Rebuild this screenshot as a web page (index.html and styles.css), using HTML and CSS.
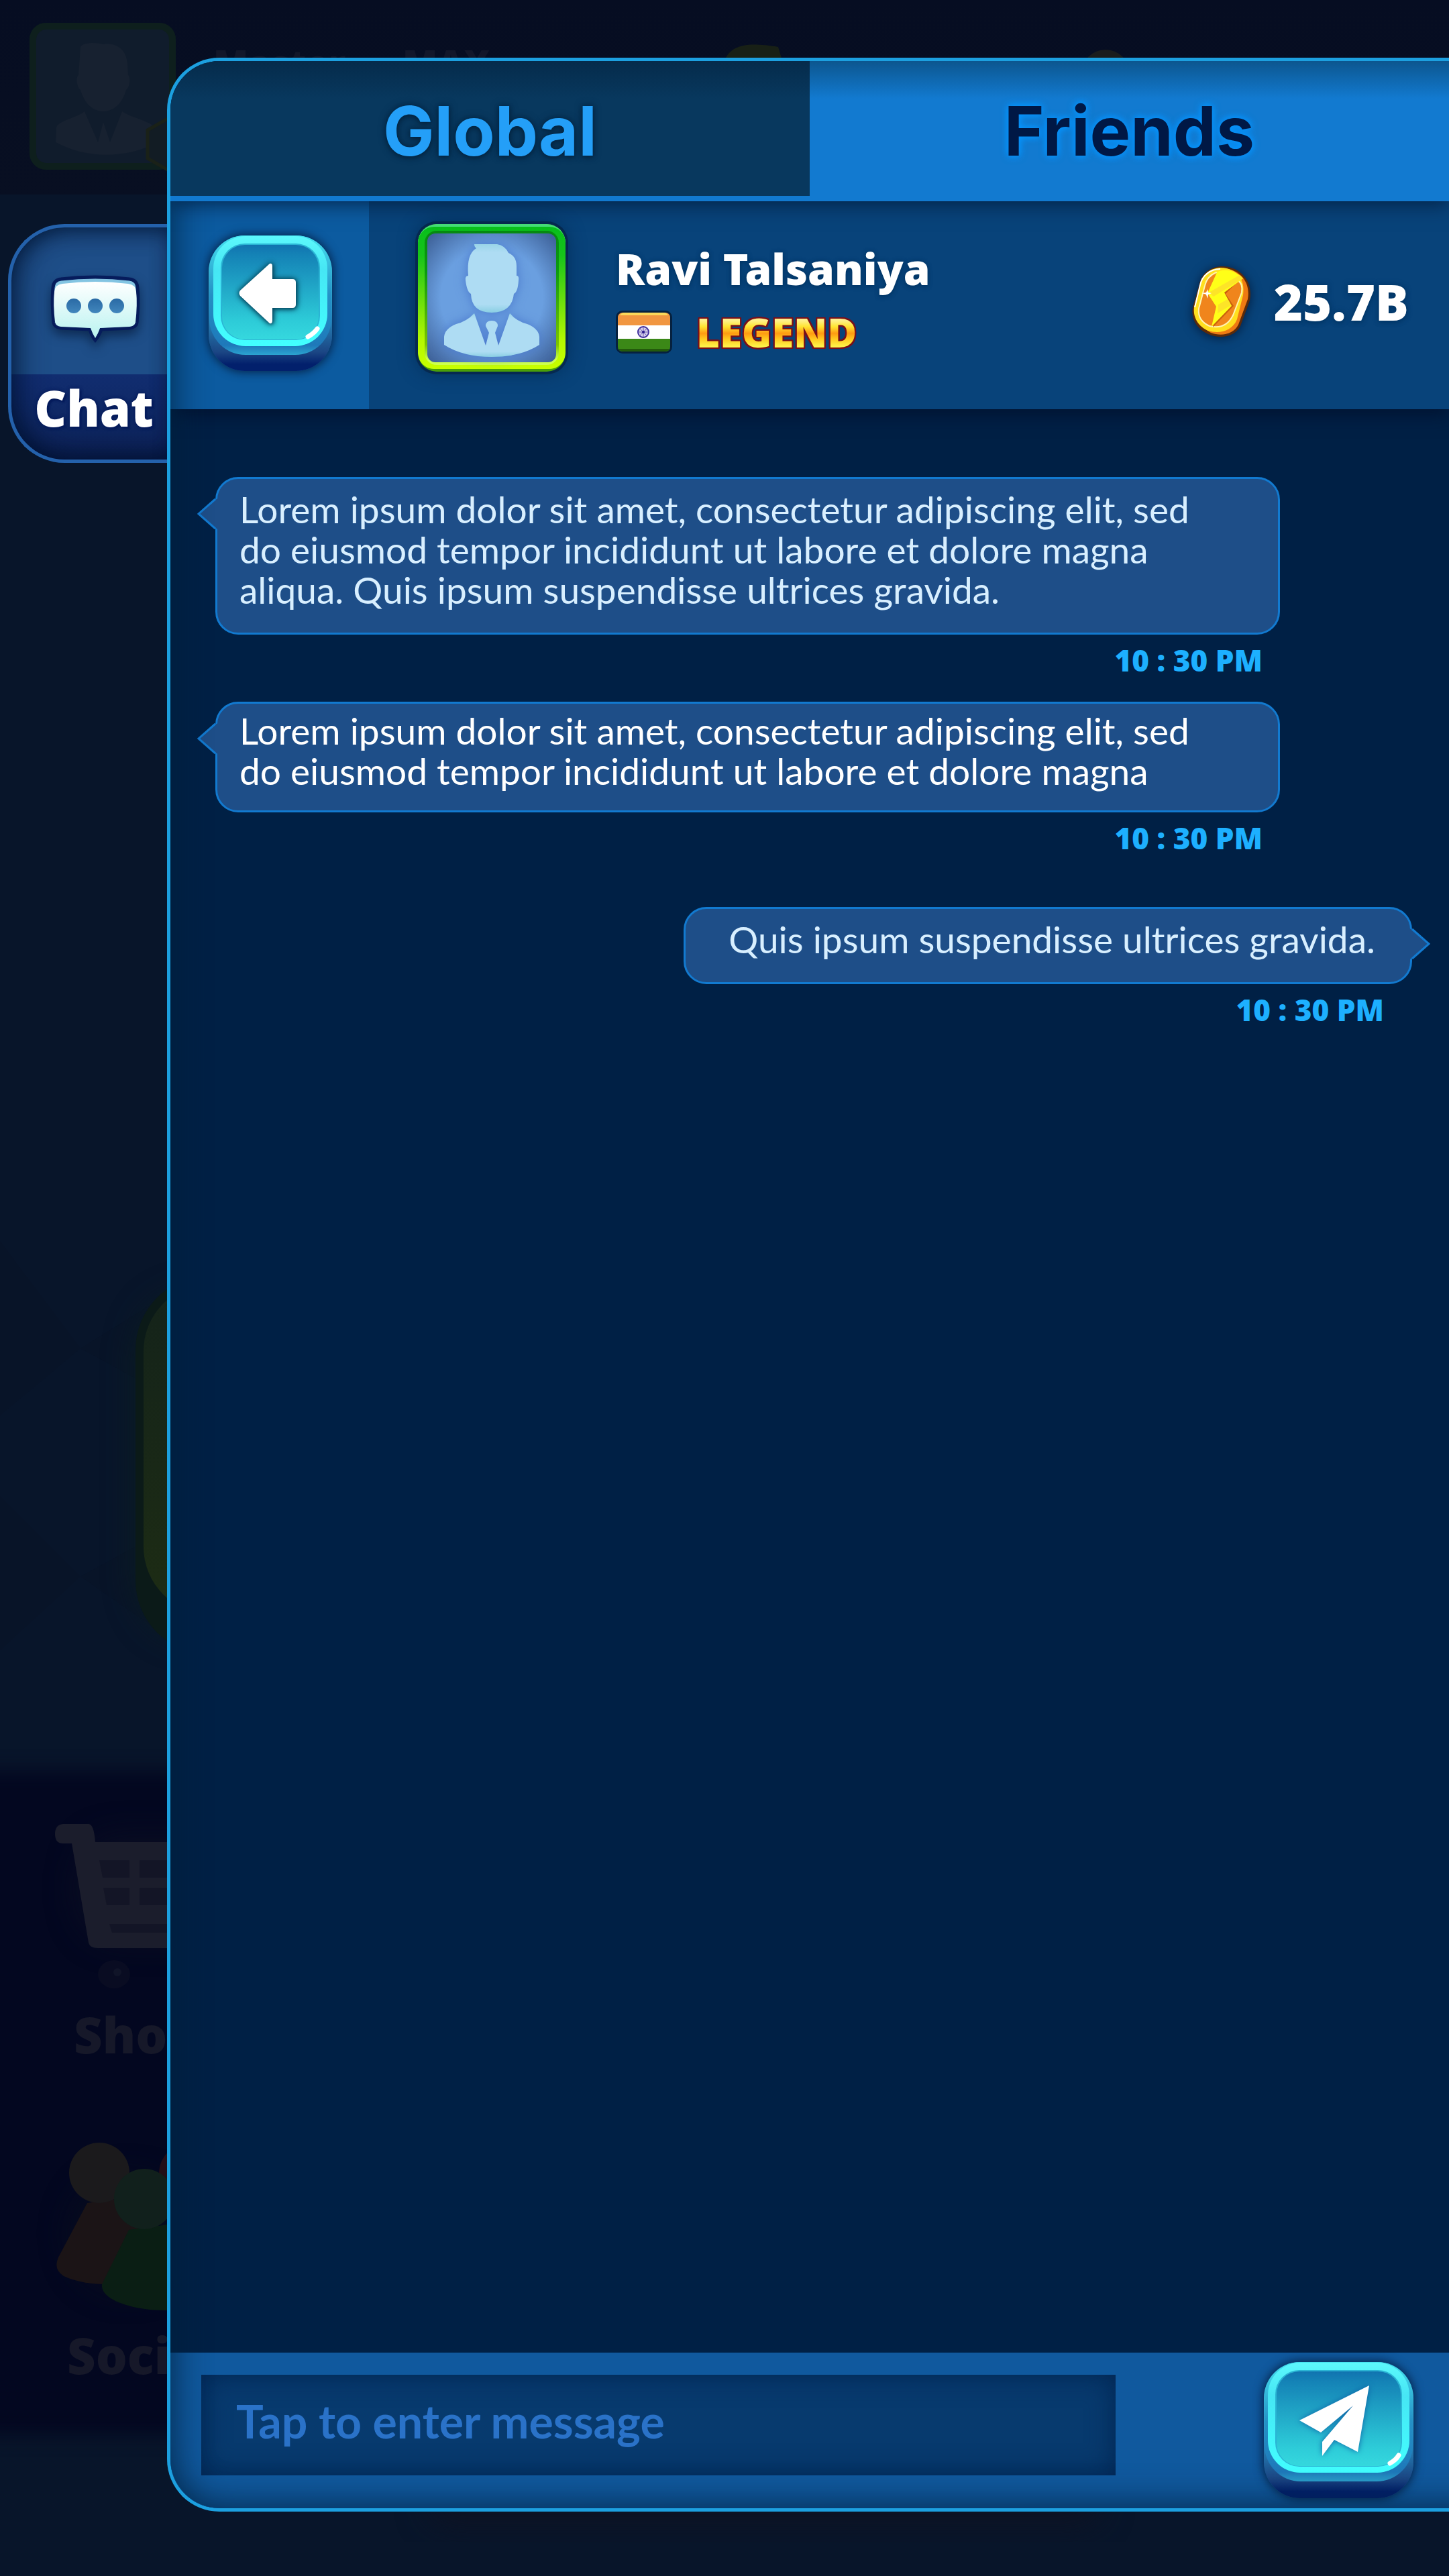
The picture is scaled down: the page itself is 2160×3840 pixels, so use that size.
FILE: index.html
```html
<!DOCTYPE html>
<html lang="en">
<head>
<meta charset="utf-8">
<meta name="viewport" content="width=device-width, initial-scale=1">
<title>Chat</title>
<link rel="stylesheet" href="styles.css">
</head>
<body>
<svg class="scene" viewBox="0 0 2160 3840" preserveAspectRatio="xMinYMin slice" aria-hidden="true">
  <defs>
    <linearGradient id="topBand" x1="0" y1="0" x2="0" y2="1"><stop offset="0" stop-color="#060d22"/><stop offset="1" stop-color="#080f22"/></linearGradient>
    <linearGradient id="play" x1="0" y1="0" x2="0" y2="1"><stop offset="0" stop-color="#14231a"/><stop offset="1" stop-color="#1d2c14"/></linearGradient>
    <filter id="soft" x="-50%" y="-50%" width="200%" height="200%" color-interpolation-filters="sRGB"><feGaussianBlur stdDeviation="24"/></filter>
    <filter id="band" x="-10%" y="-10%" width="120%" height="120%" color-interpolation-filters="sRGB"><feGaussianBlur stdDeviation="14"/></filter>
  </defs>
  <rect width="2160" height="3840" fill="#08152a"/>
  <path d="M0 1850 120 2010 0 2110ZM120 2010 249 1930V2080ZM0 2230 120 2350 0 2460ZM120 2350 249 2280V2440Z" fill="#081428"/>
  <rect width="2160" height="290" fill="url(#topBand)"/>
  <rect x="-40" y="2640" width="700" height="990" fill="#030720" filter="url(#band)"/>
  <rect x="640" y="3700" width="1000" height="60" rx="30" fill="#0e1222" filter="url(#soft)"/>
  <rect x="44" y="34" width="218" height="219" rx="24" fill="#0a1a20"/>
  <rect x="49" y="39" width="208" height="209" rx="20" fill="#101c2c" stroke="#0e1f1d" stroke-width="10"/>
  <path d="M120 70c2-6 20-8 34-4 20-3 34 8 36 28l1 18c4 2 3 18-3 22-6 22-20 32-34 32s-28-10-34-32c-6-4-7-20-3-22ZM84 190c2-10 30-14 42-24l20 46 8-30 10 30 18-46c14 10 44 14 54 28v18c-50 26-110 24-153 0Z" fill="#172130"/>
  <path d="M262 170 220 194v42l42 24" fill="#121c24" stroke="#1a2118" stroke-width="5"/>
  <path d="M1080 90c10-22 30-28 80-20l6 20Z" fill="#182016"/><circle cx="1648" cy="110" r="36" fill="#1a1c1c"/>
  <g class="scene-title" fill="#12172a"><text x="318" y="114">Master</text><text x="600" y="114">MAX</text></g>
  <rect x="205" y="1930" width="500" height="510" rx="90" fill="#0b1e20" filter="url(#soft)"/>
  <rect x="202" y="1902" width="600" height="564" rx="110" fill="#0b1a18"/>
  <rect x="214" y="1914" width="600" height="492" rx="100" fill="url(#play)"/>
  <rect x="120" y="2740" width="400" height="150" rx="60" fill="#0b0e22" filter="url(#soft)"/>
  <path d="M94 2719h38q8 0 10 27h210v158H146q-12 0-14-8L107 2748H94q-12 0-12-14t12-15Z" fill="#1b1d2c"/>
  <path d="m148 2773 5 26h40v-26ZM208 2773h50v26h-50ZM154 2814l5 26h34v-26ZM208 2814h50v26h-50ZM163 2868h100v13h-96Z" fill="#131526"/>
  <ellipse cx="170" cy="2943" rx="24" ry="21" fill="#090c22"/><circle cx="175" cy="2940" r="6" fill="#101428"/>
  <circle cx="190" cy="3330" r="80" fill="#080d1d" filter="url(#soft)"/>
  <path d="M130 3284 87 3365q-8 18 8 28 30 14 80 12l60-80-40-50Z" fill="#1b1416"/><circle cx="148" cy="3239" r="45" fill="#1b1a1c"/>
  <circle cx="282" cy="3240" r="45" fill="#220e18"/>
  <path d="M192 3324 152 3405q-2 14 20 25 40 18 100 13v-130Z" fill="#0a1e14"/><circle cx="215" cy="3278" r="45" fill="#11201c"/>
  <g class="scene-label" fill="#161829"><text x="110" y="3061">Shop</text><text x="100" y="3539">Social</text></g>
</svg>

<main class="app">
  <button class="chat-tab" type="button">
    <span class="chat-tab__icon">
      <svg width="150" height="120" viewBox="0 0 150 120" aria-hidden="true">
        <defs><linearGradient id="bub" x1="0" y1="0" x2="0" y2="1"><stop offset="0" stop-color="#fff"/><stop offset="1" stop-color="#b9f3f0"/></linearGradient><linearGradient id="dot" x1="0" y1="0" x2="0" y2="1"><stop offset="0" stop-color="#2a6aa5"/><stop offset="1" stop-color="#4287bd"/></linearGradient></defs>
        <path d="M24 15Q75 9 126 15 137 16 138 28 140 50 137 80 136 87 126 88L84 90Q80 100 75 106 70 100 67 90L24 88Q14 87 13 80 10 50 12 28 13 16 24 15Z" fill="#83c4e2" stroke="#061c5c" stroke-width="5"/>
        <path d="M26 22Q75 16 124 22 135 23 136 34 138 54 135 79 134 85 126 86L82 88Q79 97 75 103 71 97 68 88L24 86Q16 85 15 79 12 54 14 34 15 23 26 22Z" fill="url(#bub)"/>
        <g fill="url(#dot)"><circle cx="43" cy="55" r="11"/><circle cx="75" cy="55" r="11"/><circle cx="107" cy="55" r="11"/></g>
      </svg>
    </span>
    <span class="chat-tab__label">Chat</span>
  </button>

  <section class="panel">
    <nav class="tabs">
      <button class="tab" type="button">Global</button>
      <button class="tab tab--active" type="button">Friends</button>
    </nav>

    <header class="friend">
      <div class="friend__back">
        <button class="key" type="button" aria-label="Back">
          <svg width="184" height="202" viewBox="0 0 184 202" aria-hidden="true">
            <defs>
              <linearGradient id="side" x1="0" y1="0" x2="0" y2="1"><stop offset="0" stop-color="#43d8e8"/><stop offset=".55" stop-color="#2994c6"/><stop offset=".86" stop-color="#1b4684"/><stop offset=".95" stop-color="#02206c"/></linearGradient>
              <linearGradient id="shelf" x1="0" y1="0" x2="0" y2="1"><stop offset="0" stop-color="#45e2f0"/><stop offset=".5" stop-color="#2591c6"/><stop offset=".92" stop-color="#1e79ba"/><stop offset="1" stop-color="#2ba4d0"/></linearGradient>
              <linearGradient id="ring" x1="0" y1="0" x2="0" y2="1"><stop offset="0" stop-color="#5cf8fc"/><stop offset=".3" stop-color="#46e6f4"/><stop offset="1" stop-color="#42ffff"/></linearGradient>
              <linearGradient id="face" x1="0" y1="0" x2="0" y2="1"><stop offset="0" stop-color="#1173b0"/><stop offset=".1" stop-color="#1482b6"/><stop offset=".8" stop-color="#2dcbd8"/><stop offset="1" stop-color="#35d8de"/></linearGradient>
            </defs>
            <rect width="184" height="202" rx="54" fill="url(#side)"/>
            <rect x="1" width="182" height="178" rx="54" fill="url(#shelf)"/>
            <rect x="7" y="1" width="170" height="164" rx="48" fill="url(#ring)"/>
            <rect x="18" y="12" width="148" height="144" rx="36" fill="#2ab4d4"/>
            <rect x="20" y="14" width="144" height="141" rx="34" fill="url(#face)"/>
            <path class="glyph" d="M91 42q4-1 4 4v19h30q5 0 5 5v33q0 5-5 5H95v19q0 5-4 4L47 90q-3-4 0-8Z" fill="#fff"/>
            <path d="M148 151q9-5 14-12" fill="none" stroke="#fff" stroke-width="7" stroke-linecap="round"/>
          </svg>
        </button>
      </div>
      <div class="friend__body">
        <svg class="avatar" width="220" height="220" viewBox="0 0 220 220" role="img" aria-label="Player avatar">
          <defs>
            <linearGradient id="frame" x1="0" y1="0" x2="0" y2="1"><stop offset="0" stop-color="#08bf1c"/><stop offset=".2" stop-color="#16c31a"/><stop offset=".8" stop-color="#b4f800"/><stop offset="1" stop-color="#c8ff00"/></linearGradient>
            <linearGradient id="bevel" x1="0" y1="0" x2="0" y2="1"><stop offset="0" stop-color="#078a12"/><stop offset=".3" stop-color="#0b9a10"/><stop offset=".85" stop-color="#7cc400"/><stop offset=".96" stop-color="#ccff50"/></linearGradient>
            <radialGradient id="photo" r=".72"><stop offset=".55" stop-color="#6a9fe0"/><stop offset="1" stop-color="#38598f"/></radialGradient>
            <linearGradient id="man" x1="0" y1="0" x2="0" y2="1"><stop offset="0" stop-color="#9ad4e8"/><stop offset=".12" stop-color="#aedcf3"/><stop offset=".88" stop-color="#aedcf3"/><stop offset="1" stop-color="#8acfe3"/></linearGradient>
          </defs>
          <rect width="220" height="220" rx="26" fill="#4a9f08"/>
          <rect width="220" height="216" rx="26" fill="#45dd78"/>
          <rect y="4" width="220" height="212" rx="24" fill="url(#frame)"/>
          <rect x="10" y="10" width="200" height="200" rx="18" fill="url(#bevel)"/>
          <rect x="14" y="14" width="192" height="192" rx="12" fill="url(#photo)"/>
          <g fill="url(#man)" class="man"><path d="M84 30h34q12 2 17 13 12 5 12 20v14q4 0 3 7-1 17-7 20-3 28-33 28t-31-28q-6-3-8-20-1-7 4-7-3-32 12-41-3-2-3-6Z"/><path d="M84 133 101 181l5-19-5-10q0-8 9-8t9 8l-4 10 5 19 17-48q10 12 26 16 17 7 18 19v12q-28 18-71 18t-71-18v-12q1-12 18-19 16-4 27-16Z"/></g>
        </svg>
        <div class="friend__info">
          <h1 class="friend__name">Ravi Talsaniya</h1>
          <div class="friend__rank">
            <svg width="84" height="64" viewBox="0 0 84 64" role="img" aria-label="India">
              <rect width="84" height="64" rx="10" fill="#06213f"/>
              <path d="M3 22V11q0-8 8-8h62q8 0 8 8v11Z" fill="#f19640"/><path d="M6 7q2-4 7-4h58q5 0 7 4Z" fill="#fbd85a"/>
              <path d="M3 22h78v20H3Z" fill="#fff"/>
              <path d="M3 42h78v12q0 7-8 7H11q-8 0-8-7Z" fill="#3b8817"/><path d="M4 57h76q-2 4-7 4H11q-5 0-7-4Z" fill="#245a0c"/>
              <circle cx="41" cy="32" r="8" fill="#d5d0ea" stroke="#3a2a9a" stroke-width="2"/><path d="M41 24v16M33 32h16M35 26l12 12M47 26 35 38" stroke="#6a5bb5" stroke-width="1"/><circle cx="41" cy="32" r="2" fill="#2a1a8a"/>
            </svg>
            <span class="rank">LEGEND</span>
          </div>
        </div>
        <div class="wallet">
          <svg class="coin" width="88" height="108" viewBox="0 0 88 108" aria-hidden="true">
            <path d="M45 1C29 1 14 11 11 27L1 62C-2 80 8 95 24 102 42 110 64 106 72 90L86 52C92 22 70 1 45 1Z" fill="#5b2a0a"/>
            <path d="M47 4C33 4 20 12 16 28L6 62C3 80 14 93 28 100 44 106 62 102 69 88L83 50C88 24 70 5 47 4Z" fill="#ef7a12"/>
            <path d="M43 3C29 3 15 12 12 28L3 62C1 78 10 91 24 97 40 102 60 98 67 80L76 44C80 20 66 4 43 3Z" fill="#ffdf1e"/>
            <path d="M42 5C28 5 15 14 12 29L4 62" fill="none" stroke="#fff" stroke-width="2"/>
            <path d="M36 10Q22 16 19 30L10 64Q8 82 26 90 50 96 61 74L74 40Q76 26 68 22Z" fill="#f0851c" stroke="#fff3b0" stroke-width="2"/>
            <path d="M36 13 24 42 39 60 31 92 62 60 50 42 74 18Z" fill="#c8600c"/>
            <path d="M37 10C46 4 64 6 76 19L48 40 59 60 29 91 36 61 23 41Z" fill="#ffff18"/>
            <path d="M25 40 71 14 76 19 32 46ZM39 58l14-8 5 9-20 12Z" fill="#fde428"/>
            <path d="m23 35 1 5 5 1-5 2-1 6-2-6-6-2 6-1Z" fill="#fff"/>
          </svg>
          <span class="wallet__amount">25.7B</span>
        </div>
      </div>
    </header>

    <ol class="messages">
      <li class="message">
        <p class="bubble bubble--soft">Lorem ipsum dolor sit amet, consectetur adipiscing elit, sed do eiusmod tempor incididunt ut labore et dolore magna aliqua. Quis ipsum suspendisse ultrices gravida.
          <svg class="tail" width="32" height="48" viewBox="0 0 32 48" aria-hidden="true"><path d="M32 1 28 3 3 24 28 45 32 47Z" fill="#1e4e88"/><path d="M28 2 3 24 28 46" fill="none" stroke="#127ad0" stroke-width="3"/></svg></p>
        <time class="message__time" datetime="22:30">10 : 30 PM</time>
      </li>
      <li class="message">
        <p class="bubble bubble--compact">Lorem ipsum dolor sit amet, consectetur adipiscing elit, sed do eiusmod tempor incididunt ut labore et dolore magna
          <svg class="tail" width="32" height="48" viewBox="0 0 32 48" aria-hidden="true"><path d="M32 1 28 3 3 24 28 45 32 47Z" fill="#1e4e88"/><path d="M28 2 3 24 28 46" fill="none" stroke="#127ad0" stroke-width="3"/></svg></p>
        <time class="message__time" datetime="22:30">10 : 30 PM</time>
      </li>
      <li class="message message--sent">
        <p class="bubble bubble--soft">Quis ipsum suspendisse ultrices gravida.
          <svg class="tail" width="32" height="48" viewBox="0 0 32 48" aria-hidden="true"><path d="M0 1 4 3 29 24 4 45 0 47Z" fill="#1e4e88"/><path d="M4 2 29 24 4 46" fill="none" stroke="#127ad0" stroke-width="3"/></svg></p>
        <time class="message__time" datetime="22:30">10 : 30 PM</time>
      </li>
    </ol>

    <form class="composer">
      <input class="composer__input" type="text" aria-label="Message" placeholder="Tap to enter message">
      <button class="key" type="submit" aria-label="Send">
        <svg width="223" height="203" viewBox="0 0 223 203" aria-hidden="true">
          <rect width="223" height="203" rx="54" fill="url(#side)"/>
          <rect x="1" width="221" height="178" rx="54" fill="url(#shelf)"/>
          <rect x="6" y="1" width="211" height="164" rx="48" fill="url(#ring)"/>
          <rect x="17" y="12" width="189" height="144" rx="36" fill="#2ab4d4"/>
          <rect x="19" y="14" width="185" height="141" rx="34" fill="url(#face)"/>
          <path class="plane" d="M157 35 53 87 85 105 133 65 87 119V140L105 116 140 134Z" fill="#fff"/>
          <path d="M188 151q9-5 13-12" fill="none" stroke="#fff" stroke-width="7" stroke-linecap="round"/>
        </svg>
      </button>
    </form>
  </section>
</main>
</body>
</html>
```
FILE: styles.css
```css
* { box-sizing: border-box; }

body {
  margin: 0;
  background: #08152a;
  color: #fff;
  font-family: "Noto Sans", "Open Sans", sans-serif;
}

button {
  margin: 0;
  padding: 0;
  border: 0;
  background: none;
  color: inherit;
  font: inherit;
  cursor: pointer;
}

svg { display: block; flex: none; }

/* Dimmed lobby behind the chat drawer */
.scene {
  position: absolute;
  top: 0;
  left: 0;
  width: 100%;
  height: 100%;
}

.scene-label {
  font-size: 74px;
  font-weight: 900;
}

.scene-title {
  font-size: 54px;
  font-weight: 900;
}

.app {
  position: relative;
  display: grid;
  grid-template-columns: 237px minmax(0, 1fr);
  min-height: 100vh;
  padding: 86px 0 96px 12px;
}

/* Drawer handle */
.chat-tab {
  display: flex;
  flex-direction: column;
  align-self: start;
  height: 356px;
  margin-top: 248px;
  overflow: hidden;
  border: 5px solid #2461ab;
  border-right: 0;
  border-radius: 84px 0 0 84px;
  background: linear-gradient(#1e4e88 0 219px, #112d70 219px, #0d2358);
  box-shadow: inset 16px 0 44px -8px rgba(2, 20, 50, .7), inset 0 20px 30px -14px rgba(2, 20, 50, .6), inset 0 -20px 34px -14px rgba(2, 12, 40, .7);
}

.chat-tab__icon {
  display: flex;
  justify-content: center;
  height: 219px;
  padding: 62px 0 0 18px;
  width: 100%;
  filter: drop-shadow(0 8px 8px rgba(2, 20, 50, .6));
}

.chat-tab__label {
  width: 100%;
  padding-left: 14px;
  font-size: 74px;
  font-weight: 900;
  line-height: 100px;
  text-align: center;
  text-shadow: 0 0 5px #061c5c, 0 0 5px #061c5c, 3px 3px 2px #061c5c;
}

/* Drawer */
.panel {
  position: relative;
  display: flex;
  flex-direction: column;
  overflow: hidden;
  border: 5px solid #1ca0e0;
  border-right: 0;
  border-radius: 78px 0 0 78px;
  background: #002045;
}

.panel::after {
  content: "";
  position: absolute;
  inset: 0 -80px 0 0;
  border-radius: 74px 0 0 74px;
  box-shadow: inset 0 0 56px rgba(0, 32, 60, .95);
  pointer-events: none;
}

.tabs {
  position: relative;
  z-index: 1;
  display: grid;
  grid-template-columns: 1fr 1fr;
  border-bottom: 8px solid #127ad0;
  box-shadow: 0 4px 28px rgba(0, 25, 55, .8);
}

.tab {
  height: 201px;
  padding-top: 6px;
  background: linear-gradient(#052b4b, #08385e 56px);
  color: #249ff8;
  font-family: Inter, sans-serif;
  font-size: 102px;
  font-weight: 700;
  line-height: 120px;
  text-shadow: 0 0 12px #042440, 0 2px 6px #042440;
}

.tab--active {
  background: linear-gradient(#0c568f, #127ad0 56px);
  color: #001845;
  text-shadow: 0 0 12px #0595ff, 0 0 12px #0595ff;
}

.friend {
  display: flex;
  height: 310px;
  background: #08437a;
  box-shadow: 0 8px 24px rgba(0, 16, 45, .8);
}

.friend__back {
  display: flex;
  justify-content: center;
  align-items: flex-start;
  width: 296px;
  padding: 51px 0 0 2px;
  background: #0c5ba0;
}

.friend__body {
  display: flex;
  flex: 1;
  align-items: flex-start;
  padding: 34px 60px 0 73px;
}

.avatar {
  border-radius: 28px;
  box-shadow: 0 0 0 4px #06294f, 0 0 28px rgba(0, 40, 80, .9);
}

.man { filter: drop-shadow(0 0 8px #4a78cc); }

.friend__info {
  display: grid;
  gap: 32px;
  padding: 37px 0 0 75px;
}

.friend__name {
  margin: 0;
  font-size: 64px;
  font-weight: 900;
  line-height: 60px;
  text-shadow: 0 2px 6px #023666, 0 0 6px #023666;
}

.friend__rank {
  display: flex;
  gap: 36px;
}

.rank {
  background: linear-gradient(#fff08a 15px, #ffe430 24px, #ff9a12 34px, #ffc81e 42px, #fff44a 54px);
  -webkit-background-clip: text;
  background-clip: text;
  color: transparent;
  filter: drop-shadow(2px 0 #7a0f18) drop-shadow(-2px 0 #7a0f18) drop-shadow(0 2px #7a0f18) drop-shadow(0 -2px #7a0f18);
  font-size: 60px;
  font-weight: 900;
  line-height: 64px;
}

.wallet {
  display: flex;
  align-items: center;
  gap: 34px;
  height: 232px;
  margin-left: auto;
}

.coin { filter: drop-shadow(0 2px 8px rgba(0, 20, 50, .8)); }

.wallet__amount {
  font-size: 74px;
  font-weight: 900;
  line-height: 64px;
  text-shadow: 0 0 8px #023666, 0 2px 6px #023666;
}

.key {
  flex: none;
  border-radius: 54px;
  box-shadow: 0 0 14px 2px #06254c;
}

.glyph { filter: drop-shadow(0 0 4px #064a62) drop-shadow(1px 1px 2px #064a62); }
.plane { filter: drop-shadow(0 0 4px #0d62a5); }

/* Conversation */
.messages {
  display: flex;
  flex: 1;
  flex-direction: column;
  gap: 36px;
  margin: 0;
  padding: 101px 55px 60px 67px;
  list-style: none;
}

.message {
  display: flex;
  flex-direction: column;
  align-items: flex-start;
  width: 1587px;
  max-width: 100%;
}

.message--sent {
  align-items: flex-end;
  align-self: flex-end;
  margin-top: 41px;
}

.bubble {
  position: relative;
  width: 100%;
  margin: 0;
  padding: 15px 100px 34px 33px;
  border: 3px solid #127ad0;
  border-radius: 34px;
  background: #1e4e88;
  font-family: Lato, sans-serif;
  font-size: 55px;
  line-height: 60px;
}

.bubble--soft { color: #d8efff; }
.bubble--compact { padding-top: 10px; padding-bottom: 29px; }

.message--sent .bubble {
  width: auto;
  padding-right: 52px;
  padding-left: 64px;
}

.tail {
  position: absolute;
  top: 28px;
  left: -31px;
}

.message--sent .tail {
  right: -31px;
  left: auto;
}

.message__time {
  align-self: flex-end;
  padding: 12px 26px 0 0;
  color: #1db0ff;
  font-size: 44px;
  font-weight: 900;
  line-height: 52px;
}

.message--sent .message__time { padding-right: 42px; }

/* Message entry */
.composer {
  display: flex;
  align-items: flex-start;
  justify-content: space-between;
  gap: 40px;
  height: 232px;
  padding: 14px 53px 0 46px;
  background: #10599e;
}

.composer__input {
  flex: 0 1 1363px;
  min-width: 0;
  height: 150px;
  margin-top: 19px;
  padding: 0 52px 14px;
  border: 0;
  border-radius: 0;
  background: #073a6e;
  box-shadow: inset 0 0 40px #022450;
  color: #fff;
  font-family: Lato, sans-serif;
  font-size: 68px;
  font-weight: 700;
}

.composer__input::placeholder {
  color: #2a72c8;
  opacity: 1;
}
```
